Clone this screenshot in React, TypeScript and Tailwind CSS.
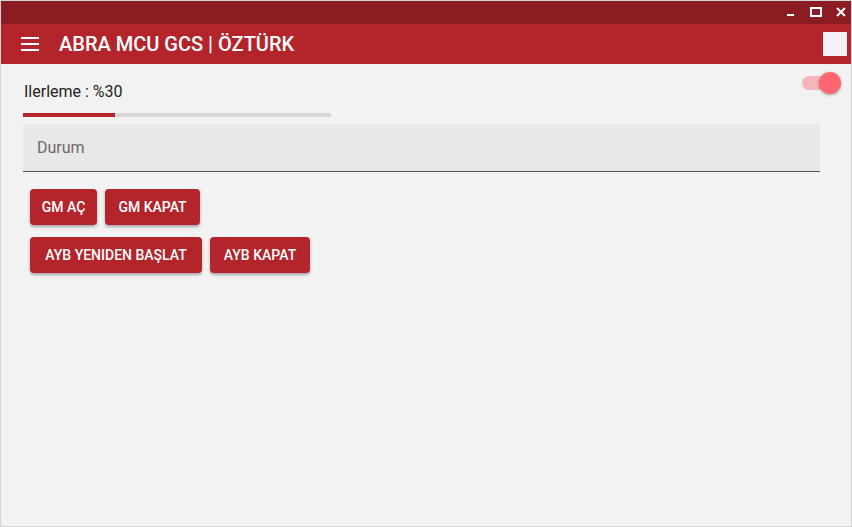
import React from "react";

function Btn({ children, w }: { children: React.ReactNode; w: string }) {
  return (
    <button className={`${w} h-9 rounded bg-[#b3242b] text-white text-[14px] font-medium shadow-[0_2px_3px_rgba(0,0,0,0.3)]`}>
      {children}
    </button>
  );
}

export default function App() {
  return (
    <div className="w-[852px] h-[527px] flex flex-col bg-[#f2f2f2] border border-[#d4d4d4] overflow-hidden" style={{ fontFamily: "Roboto, 'Liberation Sans', sans-serif" }}>
      <div className="h-6 shrink-0 bg-[#8b1c22] flex items-center justify-end pr-[6px] gap-[14px] -mt-px -mx-px">
        <svg width="10" height="10" viewBox="0 0 10 10"><rect x="1" y="7" width="7" height="2" fill="#fff" /></svg>
        <svg width="12" height="10" viewBox="0 0 12 10"><rect x="1" y="1" width="10" height="8" fill="none" stroke="#fff" strokeWidth="2" /></svg>
        <svg width="10" height="10" viewBox="0 0 10 10"><path d="M1 1L9 9M9 1L1 9" stroke="#fff" strokeWidth="2" /></svg>
      </div>
      <div className="h-10 shrink-0 bg-[#b3242b] flex items-center -mx-px pl-[21px] pr-[5px]">
        <svg width="18" height="14" viewBox="0 0 18 14">
          <rect x="0" y="0" width="18" height="2" fill="#fff" />
          <rect x="0" y="6" width="18" height="2" fill="#fff" />
          <rect x="0" y="12" width="18" height="2" fill="#fff" />
        </svg>
        <span className="ml-5 text-white text-[20px] font-medium">ABRA MCU GCS | ÖZTÜRK</span>
        <div className="ml-auto w-6 h-6 bg-[#f2f2f2]" />
      </div>
      <div className="flex-1 flex flex-col px-[22px] relative">
        <div className="absolute right-[12px] top-[8px] w-[38px] h-[22px] flex items-center">
          <div className="w-[34px] h-[14px] rounded-full bg-[#f5b5ba] ml-[1px]" />
          <div className="absolute right-[-2px] top-0 w-[22px] h-[22px] rounded-full bg-[#ff6670] shadow-[0_1px_3px_rgba(0,0,0,0.35)]" />
        </div>
        <div className="mt-[18px] ml-px text-[16px] text-[#222] leading-[19px]">Ilerleme : %30</div>
        <div className="mt-[12px] w-[308px] h-1 bg-[#d6d6d6]">
          <div className="h-1 bg-[#b3242b]" style={{ width: "30%" }} />
        </div>
        <div className="mt-[7px] w-[797px] h-12 bg-[#e8e8e8] border-b border-[#5a5a5a] flex items-center pl-[14px] text-[16px] text-[#6b6b6b]">
          Durum
        </div>
        <div className="mt-[17px] ml-[7px] flex flex-col gap-3">
          <div className="flex gap-2">
            <Btn w="w-[67px]">GM AÇ</Btn>
            <Btn w="w-[95px]">GM KAPAT</Btn>
          </div>
          <div className="flex gap-2">
            <Btn w="w-[172px]">AYB YENIDEN BAŞLAT</Btn>
            <Btn w="w-[100px]">AYB KAPAT</Btn>
          </div>
        </div>
      </div>
    </div>
  );
}
